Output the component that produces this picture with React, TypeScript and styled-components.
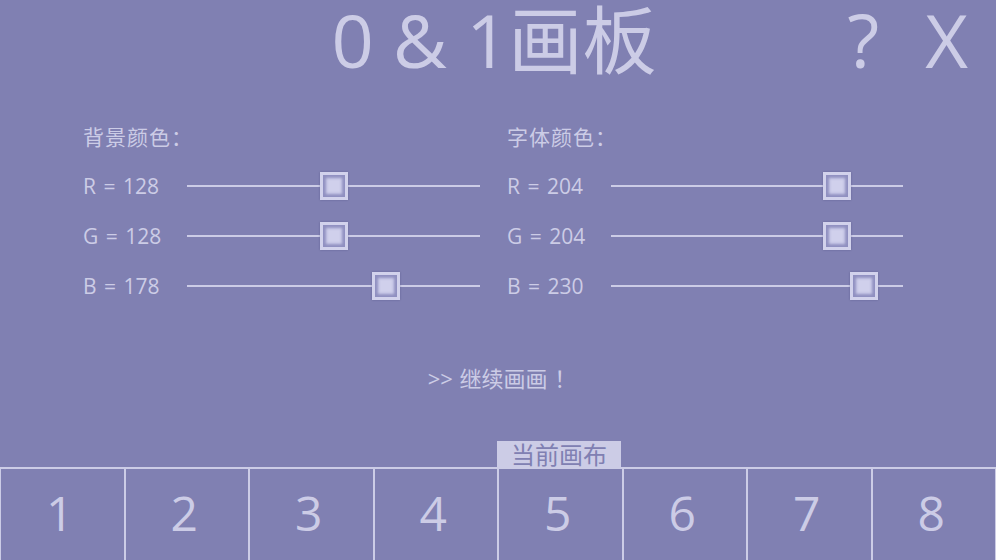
import React from 'react';
import styled, { createGlobalStyle } from 'styled-components';

const BG = '#8080b2';
const FG = '#ccccE6';
const FONT = `"Open Sans", "Noto Sans CJK SC", sans-serif`;

const GlobalStyle = createGlobalStyle`
    html, body {
        margin: 0;
        padding: 0;
        background: ${BG};
    }
    body {
        font-family: ${FONT};
        color: ${FG};
    }
`;

interface Channel {
    name: string
    value: number
}

const background: Channel[] = [
    { name: 'R', value: 128 },
    { name: 'G', value: 128 },
    { name: 'B', value: 178 },
];

const fontColor: Channel[] = [
    { name: 'R', value: 204 },
    { name: 'G', value: 204 },
    { name: 'B', value: 230 },
];

const canvases = [1, 2, 3, 4, 5, 6, 7, 8];
const current = 5;

function Slider({ value }: { value: number }) {
    // thumb is 28px wide, track 293px wide
    const left = Math.round((value / 255) * (293 - 28));
    return (
        <Track>
            <Line />
            <Thumb style={{ left }} />
        </Track>
    );
}

function ColorGroup({ title, channels }: { title: string; channels: Channel[] }) {
    return (
        <Group>
            <GroupTitle>{title}</GroupTitle>
            {channels.map(c => (
                <Row key={c.name}>
                    <RowLabel>{c.name} = {c.value}</RowLabel>
                    <Slider value={c.value} />
                </Row>
            ))}
        </Group>
    );
}

function App() {
    return (
        <>
            <GlobalStyle />
            <Page>
                <Header>
                    <span />
                    <Title>0 &amp; 1画板</Title>
                    <Actions>
                        <ActionButton>?</ActionButton>
                        <ActionButton>X</ActionButton>
                    </Actions>
                </Header>

                <Settings>
                    <ColorGroup title="背景颜色：" channels={background} />
                    <ColorGroup title="字体颜色：" channels={fontColor} />
                </Settings>

                <Continue>&gt;&gt; 继续画画 ！</Continue>

                <Tabs>
                    {canvases.map(n => (
                        <Tab key={n}>
                            {n === current && <CurrentBadge>当前画布</CurrentBadge>}
                            {n}
                        </Tab>
                    ))}
                </Tabs>
            </Page>
        </>
    );
}

const Page = styled.div`
    width: 996px;
    height: 560px;
    display: flex;
    flex-direction: column;
    background: ${BG};
    color: ${FG};
    overflow: hidden;
`;

const Header = styled.header`
    display: grid;
    grid-template-columns: 1fr auto 1fr;
    align-items: start;
    height: 82px;
`;

const Title = styled.h1`
    margin: 0 8px 0 0;
    font-size: 74px;
    font-weight: 400;
    line-height: 80px;
    white-space: nowrap;
`;

const Actions = styled.div`
    display: flex;
    justify-content: flex-end;
    gap: 46px;
    padding-right: 28px;
`;

const ActionButton = styled.span`
    font-size: 74px;
    line-height: 80px;
    cursor: pointer;
`;

const Settings = styled.section`
    display: grid;
    grid-template-columns: 397px 396px;
    column-gap: 27px;
    padding-left: 83px;
    margin-top: 40px;
`;

const Group = styled.div`
    display: flex;
    flex-direction: column;
`;

const GroupTitle = styled.div`
    font-size: 21px;
    line-height: 30px;
    height: 30px;
    margin-bottom: 9px;
    letter-spacing: 1px;
`;

const Row = styled.div`
    display: flex;
    align-items: center;
    height: 50px;
`;

const RowLabel = styled.div`
    width: 104px;
    font-size: 21px;
    line-height: 30px;
    word-spacing: 2px;
    white-space: nowrap;
`;

const Track = styled.div`
    position: relative;
    width: 293px;
    height: 30px;
    display: flex;
    align-items: center;
`;

const Line = styled.div`
    width: 100%;
    height: 2px;
    background: ${FG};
`;

const Thumb = styled.div`
    position: absolute;
    top: 1px;
    width: 28px;
    height: 28px;
    box-sizing: border-box;
    border: 3px solid #d2d2ec;
    background: #d0d0ec;
    box-shadow: inset 0 0 3px 3px #8f8fc0, 0 0 2px rgba(60, 60, 110, 0.4);
`;

const Continue = styled.div`
    margin-top: 52px;
    text-align: center;
    font-size: 22px;
    line-height: 30px;
    word-spacing: 1px;
    padding-left: 8px;
`;

const Tabs = styled.nav`
    margin-top: auto;
    height: 93px;
    display: grid;
    grid-template-columns: repeat(8, 1fr);
`;

const Tab = styled.div`
    position: relative;
    box-sizing: border-box;
    border-top: 2px solid ${FG};
    border-left: 1.5px solid ${FG};
    border-right: 1.5px solid ${FG};
    display: flex;
    align-items: center;
    justify-content: center;
    font-size: 48px;
    line-height: 60px;
    padding: 0 5px 4px 0;
`;

const CurrentBadge = styled.div`
    position: absolute;
    top: -28px;
    left: -2px;
    width: 124px;
    height: 26px;
    background: ${FG};
    color: ${BG};
    font-size: 24px;
    line-height: 27px;
    text-align: center;
`;

export default App;
